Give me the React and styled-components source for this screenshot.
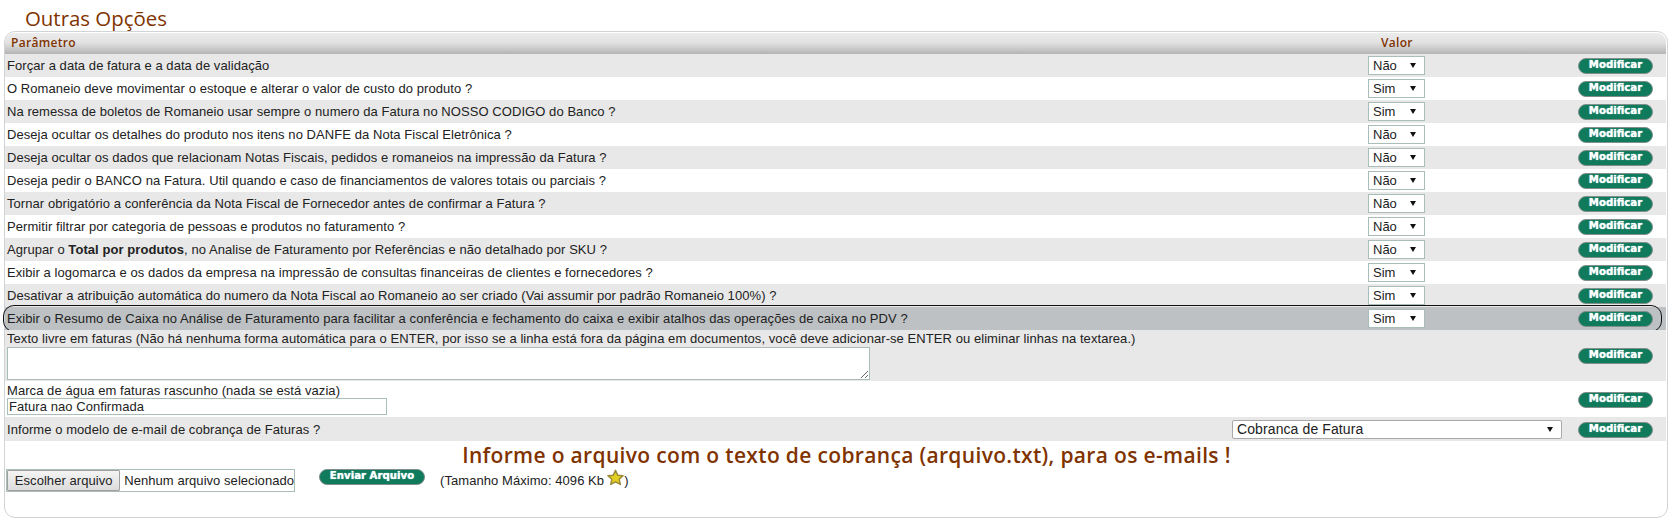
import styled, { createGlobalStyle } from "styled-components";

const GlobalStyle = createGlobalStyle`
  html, body {
    margin: 0;
    padding: 0;
    background: #fff;
  }
  *, *:before, *:after {
    box-sizing: border-box;
  }
`;

const Page = styled.div`
  width: 1673px;
  height: 529px;
  padding: 5px 5px 0 4px;
  font-family: "Liberation Sans", Arial, sans-serif;
  font-size: 13px;
  color: #222;
`;

const Title = styled.h1`
  margin: 0 0 0 21px;
  height: 26px;
  font-family: "Open Sans", sans-serif;
  font-size: 20.4px;
  line-height: 26px;
  font-weight: 400;
  color: #7f3300;
`;

const Panel = styled.div`
  height: 487px;
  border: 1px solid #d0d4d4;
  border-radius: 11px;
  padding: 1px 1px 0 0;
`;

const HeaderRow = styled.div`
  display: grid;
  grid-template-columns: 1370px 1fr;
  height: 21px;
  align-items: center;
  padding: 0 0 2px 6px;
  border-radius: 9px 9px 0 0;
  background: linear-gradient(#ececec 0%, #e2e2e2 45%, #b4b4b4 100%);
  font-family: "Open Sans", sans-serif;
  font-size: 12px;
  font-weight: 600;
  letter-spacing: 0.3px;
  color: #7f3300;
`;

const rowBackground = ({ $tone }) =>
  $tone === "active" ? "#bdc1c3" : $tone === "gray" ? "#e8e8e8" : "#fff";

const Row = styled.div`
  position: relative;
  display: grid;
  grid-template-columns: 1fr 298px;
  align-items: center;
  height: ${({ $height }) => $height || 23}px;
  padding-left: 2px;
  background: ${rowBackground};

  ${({ $tone }) =>
    $tone === "active" &&
    `
    &::after {
      content: "";
      position: absolute;
      inset: -2px 4px -2px -2px;
      border: 1px solid #111;
      border-radius: 11px;
      pointer-events: none;
    }
  `}
`;

const Label = styled.div`
  line-height: 15px;
  white-space: nowrap;
  letter-spacing: 0.065px;

  b {
    font-weight: 700;
  }
`;

const Controls = styled.div`
  display: flex;
  align-items: center;
  justify-content: space-between;
  padding-right: 13px;
`;

const SelectBox = styled.div`
  position: relative;
  width: ${({ $wide }) => ($wide ? 330 : 57)}px;
  height: 19px;
  ${({ $wide }) => $wide && "margin-left: -136px;"}

  &::after {
    content: "";
    position: absolute;
    top: 7px;
    right: 9px;
    border-style: solid;
    border-width: 5px 3.5px 0;
    border-color: #111 transparent transparent;
    pointer-events: none;
  }
`;

const Select = styled.select`
  appearance: none;
  width: 100%;
  height: 100%;
  padding: 0 0 0 4px;
  border: 1px solid ${({ $wide }) => ($wide ? "#a9a9a9" : "#a9bdb9")};
  border-radius: ${({ $wide }) => ($wide ? 2 : 0)}px;
  background: #fff;
  font-family: "Liberation Sans", Arial, sans-serif;
  font-size: ${({ $wide }) => ($wide ? 14 : 13)}px;
  letter-spacing: ${({ $wide }) => ($wide ? 0.1 : 0)}px;
  color: #222;
`;

const GreenButton = styled.button`
  flex: none;
  width: ${({ $width }) => $width || 75}px;
  height: 16px;
  margin-top: 1px;
  padding: 0 0 2px;
  border: 1px solid #7f8f8a;
  border-radius: 8px;
  background: #0f7a5c;
  font-family: "DejaVu Sans", sans-serif;
  font-size: 10.2px;
  font-weight: 700;
  line-height: 12px;
  color: #fff;
  text-shadow: 0 0 1px #dff;
`;

const Stack = styled.div`
  display: flex;
  flex-direction: column;
  gap: ${({ $gap }) => $gap || 0}px;
`;

const TextArea = styled.textarea`
  display: block;
  width: 863px;
  height: 33px;
  margin: 0;
  padding: 1px;
  border: 1px solid #a9bdb9;
  background: #fff;
  resize: both;
`;

const TextInput = styled.input`
  display: block;
  width: 380px;
  height: 17px;
  margin: 0;
  padding: 0 1px;
  border: 1px solid #a9bdb9;
  font-family: "Liberation Sans", Arial, sans-serif;
  font-size: 13px;
  letter-spacing: 0.065px;
  color: #222;
`;

const Upload = styled.div`
  text-align: center;
`;

const UploadTitle = styled.h2`
  margin: 0;
  height: 28px;
  padding: 1px 0 0 22px;
  font-family: "Open Sans", sans-serif;
  font-size: 21px;
  line-height: 26px;
  font-weight: 600;
  letter-spacing: 0.335px;
  color: #7f3300;
`;

const UploadRow = styled.div`
  display: flex;
  align-items: flex-start;
  padding-left: 1px;
`;

const FileField = styled.div`
  display: flex;
  align-items: center;
  width: 289px;
  height: 23px;
  border: 1px solid #a9bdb9;
  white-space: nowrap;
  letter-spacing: 0.05px;
`;

const FileButton = styled.button`
  width: 114px;
  height: 21px;
  margin-right: 4px;
  padding: 0;
  border: 1px solid #a0a0a0;
  border-radius: 1px;
  background: linear-gradient(#f4f4f4, #dcdcdc);
  font-family: "Liberation Sans", Arial, sans-serif;
  font-size: 13px;
  letter-spacing: 0.05px;
  color: #222;
`;

const SendCell = styled.div`
  margin: -2px 15px 0 24px;
`;

const SizeNote = styled.div`
  display: flex;
  align-items: center;
  height: 20px;
  margin-top: 1px;
  letter-spacing: 0.065px;
`;

const StarIcon = styled.svg`
  margin: -6px 0 0 3px;
`;

const Star = () => (
  <StarIcon width="17" height="17" viewBox="0 0 19 18">
    <path
      d="M9.5 1 L12 6.4 L18 7 L13.6 11 L14.9 16.8 L9.5 13.9 L4.1 16.8 L5.4 11 L1 7 L7 6.4 Z"
      fill="#e3cf1f"
      stroke="#9a8a3a"
      strokeWidth="1.6"
      strokeLinejoin="round"
    />
  </StarIcon>
);

const yesNoRows = [
  ["Forçar a data de fatura e a data de validação", "Não"],
  ["O Romaneio deve movimentar o estoque e alterar o valor de custo do produto ?", "Sim"],
  ["Na remessa de boletos de Romaneio usar sempre o numero da Fatura no NOSSO CODIGO do Banco ?", "Sim"],
  ["Deseja ocultar os detalhes do produto nos itens no DANFE da Nota Fiscal Eletrônica ?", "Não"],
  ["Deseja ocultar os dados que relacionam Notas Fiscais, pedidos e romaneios na impressão da Fatura ?", "Não"],
  ["Deseja pedir o BANCO na Fatura. Util quando e caso de financiamentos de valores totais ou parciais ?", "Não"],
  ["Tornar obrigatório a conferência da Nota Fiscal de Fornecedor antes de confirmar a Fatura ?", "Não"],
  ["Permitir filtrar por categoria de pessoas e produtos no faturamento ?", "Não"],
  [<>Agrupar o <b>Total por produtos</b>, no Analise de Faturamento por Referências e não detalhado por SKU ?</>, "Não"],
  ["Exibir a logomarca e os dados da empresa na impressão de consultas financeiras de clientes e fornecedores ?", "Sim"],
  ["Desativar a atribuição automática do numero da Nota Fiscal ao Romaneio ao ser criado (Vai assumir por padrão Romaneio 100%) ?", "Sim"],
  ["Exibir o Resumo de Caixa no Análise de Faturamento para facilitar a conferência e fechamento do caixa e exibir atalhos das operações de caixa no PDV ?", "Sim"],
];

function YesNo({ value }) {
  return (
    <SelectBox>
      <Select defaultValue={value}>
        <option>Não</option>
        <option>Sim</option>
      </Select>
    </SelectBox>
  );
}

export default function App() {
  return (
    <Page>
      <GlobalStyle />
      <Title>Outras Opções</Title>
      <Panel>
        <HeaderRow>
          <span>Parâmetro</span>
          <span>Valor</span>
        </HeaderRow>
        {yesNoRows.map(([label, value], i) => (
          <Row key={i} $tone={i === 11 ? "active" : i % 2 === 0 ? "gray" : "white"}>
            <Label>{label}</Label>
            <Controls>
              <YesNo value={value} />
              <GreenButton>Modificar</GreenButton>
            </Controls>
          </Row>
        ))}
        <Row $tone="gray" $height={51}>
          <Stack $gap={1}>
            <Label>
              Texto livre em faturas (Não há nenhuma forma automática para o ENTER, por isso se a linha está fora da
              página em documentos, você deve adicionar-se ENTER ou eliminar linhas na textarea.)
            </Label>
            <TextArea />
          </Stack>
          <Controls>
            <span />
            <GreenButton>Modificar</GreenButton>
          </Controls>
        </Row>
        <Row $tone="white" $height={36}>
          <Stack>
            <Label>Marca de água em faturas rascunho (nada se está vazia)</Label>
            <TextInput defaultValue="Fatura nao Confirmada" />
          </Stack>
          <Controls>
            <span />
            <GreenButton>Modificar</GreenButton>
          </Controls>
        </Row>
        <Row $tone="gray" $height={24}>
          <Label>Informe o modelo de e-mail de cobrança de Faturas ?</Label>
          <Controls>
            <SelectBox $wide>
              <Select $wide defaultValue="Cobranca de Fatura">
                <option>Cobranca de Fatura</option>
              </Select>
            </SelectBox>
            <GreenButton>Modificar</GreenButton>
          </Controls>
        </Row>
        <Upload>
          <UploadTitle>Informe o arquivo com o texto de cobrança (arquivo.txt), para os e-mails !</UploadTitle>
          <UploadRow>
            <FileField>
              <FileButton>Escolher arquivo</FileButton>
              Nenhum arquivo selecionado
            </FileField>
            <SendCell>
              <GreenButton $width={106}>Enviar Arquivo</GreenButton>
            </SendCell>
            <SizeNote>
              (Tamanho Máximo: 4096 Kb
              <Star />)
            </SizeNote>
          </UploadRow>
        </Upload>
      </Panel>
    </Page>
  );
}
